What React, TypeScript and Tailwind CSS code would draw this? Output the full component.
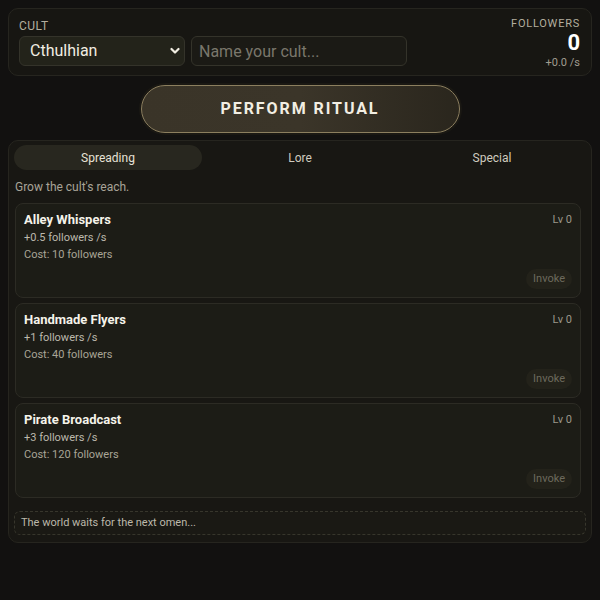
import { useState } from "react";

const upgrades = [
  { name: "Alley Whispers", rate: "+0.5 followers /s", cost: "Cost: 10 followers" },
  { name: "Handmade Flyers", rate: "+1 followers /s", cost: "Cost: 40 followers" },
  { name: "Pirate Broadcast", rate: "+3 followers /s", cost: "Cost: 120 followers" },
];

const tabs = ["Spreading", "Lore", "Special"];

export default function App() {
  const [tab, setTab] = useState("Spreading");
  const [cult, setCult] = useState("Cthulhian");

  return (
    <div className="min-h-screen bg-[#121110] px-2 pt-2 text-[#e8e4d8]" style={{ fontFamily: "Roboto, 'Noto Sans', sans-serif" }}>
      {/* Header */}
      <div className="flex items-start justify-between rounded-[10px] border border-[#26251f] bg-[#171612] px-[10px]">
        <div className="pb-[9px] pt-[10px]">
          <div className="text-[12px] uppercase leading-[14px] tracking-[0.04em] text-[#b3ae9f]">Cult</div>
          <div className="mt-[3px] flex gap-[6px]">
            <div className="relative">
              <select
                value={cult}
                onChange={(e) => setCult(e.target.value)}
                className="h-[30px] w-[166px] appearance-none rounded-[6px] border border-[#34332a] bg-[#23231a] pl-[10px] text-[16px] text-[#f1ede2] outline-none"
              >
                <option>Cthulhian</option>
                <option>Hasturian</option>
                <option>Dagonite</option>
              </select>
              <svg className="pointer-events-none absolute right-[5px] top-[11px]" width="10" height="8" viewBox="0 0 10 8">
                <path d="M1.5 2 L5 5.5 L8.5 2" fill="none" stroke="#f1ede2" strokeWidth="2.2" strokeLinecap="round" strokeLinejoin="round" />
              </svg>
            </div>
            <input
              placeholder="Name your cult..."
              className="h-[30px] w-[216px] rounded-[6px] border border-[#34332a] bg-[#1b1a15] px-[7px] text-[16px] text-[#f1ede2] outline-none placeholder:text-[#7a776c]"
            />
          </div>
        </div>
        <div className="pr-px pt-[9px] text-right">
          <div className="text-[11px] uppercase leading-[12px] tracking-[0.07em] text-[#b3ae9f]">Followers</div>
          <div className="text-[22px] font-bold leading-[26px] text-white">0</div>
          <div className="text-[11px] leading-[14px] text-[#a19d90]">+0.0 /s</div>
        </div>
      </div>

      {/* Ritual */}
      <div className="flex justify-center pb-[7px] pt-[9px]">
        <button className="h-[48px] w-[319px] rounded-full border border-[#8c7f5f] bg-gradient-to-r from-[#3a3428] via-[#3b3529] to-[#2a261d] text-[16px] font-bold uppercase tracking-[0.12em] text-[#f2eee3] shadow-[0_0_0_2px_#1a1813]">
          Perform Ritual
        </button>
      </div>

      {/* Main panel */}
      <div className="rounded-[10px] border border-[#26251f] bg-[#181713] px-[5px] pb-[7px] pt-[4px]">
        <div className="grid grid-cols-3 gap-1">
          {tabs.map((t) => (
            <button
              key={t}
              onClick={() => setTab(t)}
              className={
                t === tab
                  ? "h-[25px] rounded-full bg-[#28271f] text-[12px] text-[#e6e2d6]"
                  : "h-[25px] rounded-full text-[12px] text-[#cfcbbf]"
              }
            >
              {t}
            </button>
          ))}
        </div>
        <div className="px-px pb-[8px] pt-[9px] text-[12px] leading-[16px] text-[#a8a498]">Grow the cult's reach.</div>
        <div className="flex flex-col gap-[5px] pl-px pr-[5px]">
          {upgrades.map((u) => (
            <div key={u.name} className="flex h-[95px] flex-col rounded-[8px] border border-[#2c2b24] bg-[#1c1c16] px-[8px] pb-[8px] pt-[7px]">
              <div className="flex justify-between">
                <div className="text-[13px] font-bold leading-[18px] text-[#f5f3ea]">{u.name}</div>
                <div className="text-[11px] leading-[18px] text-[#9b978a]">Lv 0</div>
              </div>
              <div className="text-[11px] leading-[17px] text-[#bdb9ad]">{u.rate}</div>
              <div className="text-[11px] leading-[17px] text-[#a9a597]">{u.cost}</div>
              <div className="mt-auto flex justify-end">
                <button disabled className="h-[20px] rounded-full bg-[#23221a] px-[7px] text-[11px] text-[#6d6a5d]">
                  Invoke
                </button>
              </div>
            </div>
          ))}
        </div>
        <div className="mt-[13px] rounded-[6px] border border-dashed border-[#37362c] bg-[#1a1914] px-[6px] py-[3px] text-[11px] leading-[16px] text-[#bcb8aa]">
          The world waits for the next omen...
        </div>
      </div>
    </div>
  );
}
